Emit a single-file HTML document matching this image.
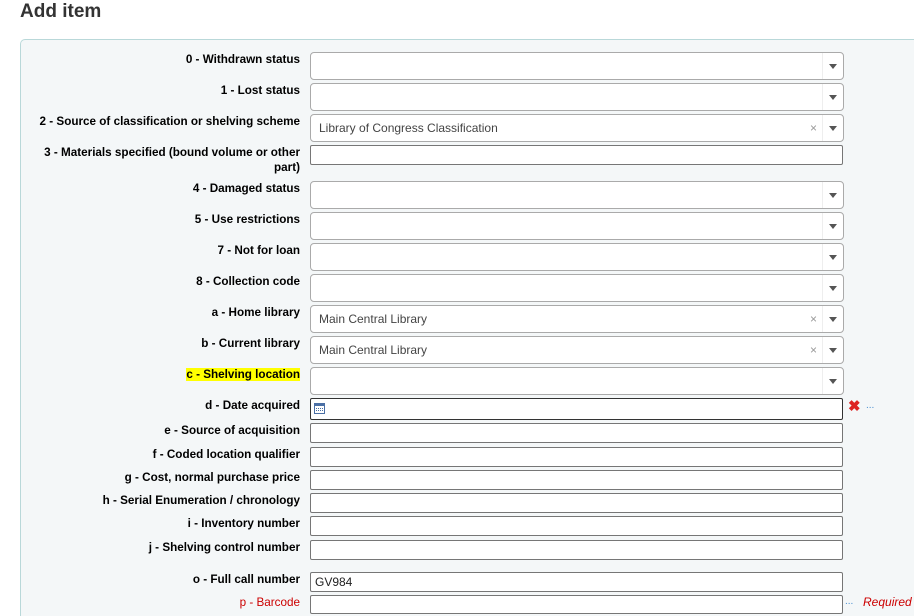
<!DOCTYPE html>
<html><head><meta charset="utf-8"><style>
html,body{margin:0;width:914px;height:616px;overflow:hidden;background:#fff;font-family:"Liberation Sans",Arial,sans-serif;position:relative}
h1{position:absolute;left:20px;top:0;margin:0;font-size:19px;font-weight:bold;color:#333;line-height:24px}
.fs{position:absolute;left:20px;top:39px;width:893px;height:577px;background:#f4f7f8;border:1px solid #b9d8d9;border-bottom:none;border-right:none;border-radius:5px 0 0 0}
.l{position:absolute;right:614px;font-size:11.7px;font-weight:bold;color:#000;text-align:right;line-height:15px;white-space:nowrap}
.s{position:absolute;left:310px;width:532px;height:26px;background:#fff;border:1px solid #aaa;border-radius:4px;font-size:12px;color:#444;line-height:26px}
.s span.t{position:absolute;left:8px}
.s .a{position:absolute;right:0;top:0;width:20px;height:26px;border-left:1px solid #eee}
.s .a:after{content:"";position:absolute;left:6px;top:11px;border-left:4px solid transparent;border-right:4px solid transparent;border-top:5px solid #555}
.s .x{position:absolute;right:26px;top:0;color:#999;font-size:12px}
.i{position:absolute;left:310px;width:531px;height:18px;background:#fff;border:1px solid #767676;border-radius:2px;font-size:12px;line-height:18px;color:#222}
</style></head><body>
<h1>Add item</h1>
<div class="fs"></div>
<div class="l" style="top:52px">0 - Withdrawn status</div><div class="s" style="top:52px"><div class="a"></div></div>
<div class="l" style="top:83px">1 - Lost status</div><div class="s" style="top:83px"><div class="a"></div></div>
<div class="l" style="top:114px">2 - Source of classification or shelving scheme</div><div class="s" style="top:114px"><span class="t">Library of Congress Classification</span><span class="x">×</span><div class="a"></div></div>
<div class="l" style="top:145px">3 - Materials specified (bound volume or other<br>part)</div><div class="i" style="top:145px"></div>
<div class="l" style="top:181px">4 - Damaged status</div><div class="s" style="top:181px"><div class="a"></div></div>
<div class="l" style="top:212px">5 - Use restrictions</div><div class="s" style="top:212px"><div class="a"></div></div>
<div class="l" style="top:243px">7 - Not for loan</div><div class="s" style="top:243px"><div class="a"></div></div>
<div class="l" style="top:274px">8 - Collection code</div><div class="s" style="top:274px"><div class="a"></div></div>
<div class="l" style="top:305px">a - Home library</div><div class="s" style="top:305px"><span class="t">Main Central Library</span><span class="x">×</span><div class="a"></div></div>
<div class="l" style="top:336px">b - Current library</div><div class="s" style="top:336px"><span class="t">Main Central Library</span><span class="x">×</span><div class="a"></div></div>
<div class="l" style="top:367px"><span style="background:#ff0">c - Shelving location</span></div><div class="s" style="top:367px"><div class="a"></div></div>
<div class="l" style="top:398px">d - Date acquired</div><div class="i" style="top:398px;height:20px;border-color:#333"><svg style="position:absolute;left:3px;top:4px" width="11" height="11"><rect x=".5" y=".5" width="10" height="10" fill="#fff" stroke="#4a6fa5"/><rect x="1" y="1" width="9" height="2" fill="#4a6fa5"/><g fill="#4a6fa5"><rect x="2" y="5" width="1" height="1"/><rect x="4" y="5" width="1" height="1"/><rect x="6" y="5" width="1" height="1"/><rect x="8" y="5" width="1" height="1"/><rect x="2" y="7" width="1" height="1"/><rect x="4" y="7" width="1" height="1"/><rect x="6" y="7" width="1" height="1"/><rect x="8" y="7" width="1" height="1"/></g></svg></div>
<div style="position:absolute;left:848px;top:397px;color:#d22;font-weight:bold;font-size:15px">✖</div><div style="position:absolute;left:866px;top:400px;color:#4a8fd0;font-size:10px">...</div>
<div class="l" style="top:423px">e - Source of acquisition</div><div class="i" style="top:423px"></div>
<div class="l" style="top:447px">f - Coded location qualifier</div><div class="i" style="top:447px"></div>
<div class="l" style="top:470px">g - Cost, normal purchase price</div><div class="i" style="top:470px"></div>
<div class="l" style="top:493px">h - Serial Enumeration / chronology</div><div class="i" style="top:493px"></div>
<div class="l" style="top:516px">i - Inventory number</div><div class="i" style="top:516px"></div>
<div class="l" style="top:540px">j - Shelving control number</div><div class="i" style="top:540px"></div>
<div class="l" style="top:572px">o - Full call number</div><div class="i" style="top:572px"><span style="padding-left:4px">GV984</span></div>
<div class="l" style="top:595px;color:#c00;font-weight:normal">p - Barcode</div><div class="i" style="top:595px;height:17px"></div>
<div style="position:absolute;left:845px;top:596px;color:#4a8fd0;font-size:10px">...</div>
<div style="position:absolute;left:863px;top:595px;color:#c00;font-style:italic;font-size:12px">Required</div>
</body></html>
